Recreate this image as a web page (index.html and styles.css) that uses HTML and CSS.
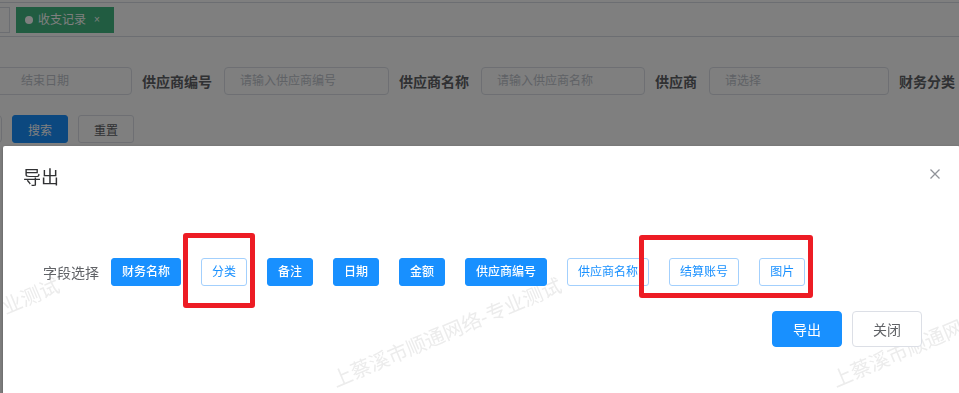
FILE: index.html
```html
<!DOCTYPE html>
<html lang="zh-CN">
<head>
<meta charset="utf-8">
<title>收支记录</title>
<link rel="stylesheet" href="styles.css">
</head>
<body>
<div class="app">
  <div class="tagsbar">
    <div class="tab tab-prev"></div>
    <div class="tab tab-active"><span class="dot"></span><span>收支记录</span><span class="tab-close">×</span></div>
  </div>
  <div class="content">
    <div class="form-row">
      <div class="input range">结束日期</div>
      <label class="flabel">供应商编号</label>
      <div class="input w165">请输入供应商编号</div>
      <label class="flabel">供应商名称</label>
      <div class="input w164">请输入供应商名称</div>
      <label class="flabel">供应商</label>
      <div class="input w180">请选择</div>
      <label class="flabel">财务分类</label>
      <div class="input w180">请选择</div>
    </div>
    <div class="form-row row2">
      <div class="input stub"></div>
      <button class="btn btn-primary">搜索</button>
      <button class="btn">重置</button>
    </div>
  </div>
</div>

<div class="mask"></div>

<div class="dialog">
  <div class="wm wm1">上蔡溪市顺通网络-专业测试</div>
  <div class="wm wm2">上蔡溪市顺通网络-专业测试</div>
  <div class="wm wm3">上蔡溪市顺通网络-专业测试</div>
  <div class="dialog-header">
    <span class="dialog-title">导出</span>
    <svg class="dialog-close" width="10" height="10" viewBox="0 0 10 10"><path d="M0.5 0.5 L9.5 9.5 M9.5 0.5 L0.5 9.5" stroke="#909399" stroke-width="1.3" fill="none"/></svg>
  </div>
  <div class="dialog-body">
    <div class="field-row">
      <span class="field-label">字段选择</span>
      <div class="tags">
        <span class="tag">财务名称</span>
        <span class="tag plain">分类</span>
        <span class="tag">备注</span>
        <span class="tag">日期</span>
        <span class="tag">金额</span>
        <span class="tag">供应商编号</span>
        <span class="tag plain">供应商名称</span>
        <span class="tag plain">结算账号</span>
        <span class="tag plain">图片</span>
      </div>
    </div>
  </div>
  <div class="dialog-footer">
    <button class="dbtn dbtn-primary">导出</button>
    <button class="dbtn">关闭</button>
  </div>
</div>

<div class="mark mark1"></div>
<div class="mark mark2"></div>
</body>
</html>
```

FILE: styles.css
```css
html, body {
  margin: 0;
  padding: 0;
}
body {
  width: 959px;
  height: 393px;
  overflow: hidden;
  background: #fff;
  font-family: "Helvetica Neue", Helvetica, "Noto Sans CJK SC", "Liberation Sans", sans-serif;
  position: relative;
}

/* ---------- page behind ---------- */
.tagsbar {
  margin-top: 2px;
  height: 35px;
  box-sizing: border-box;
  border-top: 1px solid #d8dce5;
  border-bottom: 1px solid #d8dce5;
  padding-top: 4px;
  display: flex;
  align-items: flex-start;
  gap: 6px;
}
.tab {
  height: 26px;
  box-sizing: border-box;
  border: 1px solid #d8dce5;
  background: #fff;
  color: #495060;
  font-size: 12px;
  line-height: 24px;
  padding: 0 8px;
  display: flex;
  align-items: center;
  flex: none;
}
.tab-prev {
  width: 30px;
  margin-left: -20px;
}
.tab-active {
  background: #42b983;
  border-color: #42b983;
  color: #fff;
}
.dot {
  width: 8px;
  height: 8px;
  border-radius: 50%;
  background: #fff;
  margin-right: 5px;
}
.tab-close {
  width: 16px;
  margin-left: 3px;
  text-align: center;
  font-size: 10px;
}

.content {
  padding-top: 30px;
}
.form-row {
  display: flex;
  align-items: center;
  white-space: nowrap;
  height: 28px;
}
.row2 {
  margin-top: 20px;
}
.input {
  flex: none;
  height: 28px;
  box-sizing: border-box;
  border: 1px solid #dcdfe6;
  border-radius: 4px;
  font-size: 12px;
  line-height: 26px;
  color: #c0c4cc;
  padding-left: 15px;
  background: #fff;
}
.range {
  width: 180px;
  margin-left: -48px;
  padding-left: 68px;
}
.w165 { width: 165px; }
.w164 { width: 164px; }
.w180 { width: 180px; }
.stub {
  width: 40px;
  margin-left: -38px;
}
.flabel {
  flex: none;
  margin-left: 10px;
  padding-right: 12px;
  font-size: 14px;
  font-weight: 700;
  color: #606266;
}
.btn {
  flex: none;
  margin-left: 10px;
  height: 28px;
  box-sizing: border-box;
  padding: 0 15px;
  font-size: 12px;
  font-family: inherit;
  border: 1px solid #dcdfe6;
  border-radius: 3px;
  background: #fff;
  color: #606266;
}
.btn-primary {
  background: #1890ff;
  border-color: #1890ff;
  color: #fff;
}

/* ---------- modal ---------- */
.mask {
  position: fixed;
  inset: 0;
  background: rgba(0, 0, 0, 0.5);
}
.dialog {
  position: absolute;
  left: 3px;
  top: 146px;
  width: 957px;
  height: 260px;
  background: #fff;
  overflow: hidden;
  border-radius: 2px;
  box-shadow: 0 1px 3px rgba(0, 0, 0, 0.3);
}
.dialog-header {
  padding: 20px 20px 10px;
  line-height: 24px;
}
.dialog-title {
  font-size: 18px;
  color: #303133;
}
.dialog-close {
  position: absolute;
  left: 927px;
  top: 23px;
}
.dialog-body {
  position: relative;
  padding: 57px 20px 0 40px;
}
.field-row {
  display: flex;
  align-items: center;
  white-space: nowrap;
}
.field-label {
  font-size: 14px;
  color: #606266;
  padding-right: 12px;
}
.tags {
  display: flex;
  gap: 20px;
}
.tag {
  height: 28px;
  box-sizing: border-box;
  padding: 0 10px;
  font-size: 12px;
  font-weight: 500;
  line-height: 26px;
  border: 1px solid #1890ff;
  border-radius: 3px;
  background: #1890ff;
  color: #fff;
}
.tag.plain {
  font-weight: 400;
  background: #fff;
  border-color: #a3d0fd;
  color: #1890ff;
}
.dialog-footer {
  position: relative;
  display: flex;
  justify-content: flex-end;
  gap: 10px;
  margin-top: 25px;
  padding-right: 38px;
}
.dbtn {
  height: 36px;
  box-sizing: border-box;
  padding: 0 20px;
  font-size: 14px;
  font-family: inherit;
  border: 1px solid #dcdfe6;
  border-radius: 4px;
  background: #fff;
  color: #606266;
}
.dbtn-primary {
  background: #1890ff;
  border-color: #1890ff;
  color: #fff;
}

/* watermark */
.wm {
  position: absolute;
  top: 222px;
  font-size: 20px;
  line-height: 24px;
  color: #ececec;
  white-space: nowrap;
  transform-origin: 0 100%;
  transform: rotate(-23deg);
  pointer-events: none;
}
.wm1 { left: -167px; }
.wm2 { left: 335px; }
.wm3 { left: 835px; }

/* red annotation boxes */
.mark {
  position: absolute;
  box-sizing: border-box;
  border: 5px solid #ed1c24;
  border-radius: 3px;
}
.mark1 {
  left: 183px;
  top: 233px;
  width: 72px;
  height: 75px;
}
.mark2 {
  left: 639px;
  top: 235px;
  width: 174px;
  height: 63px;
}
```
